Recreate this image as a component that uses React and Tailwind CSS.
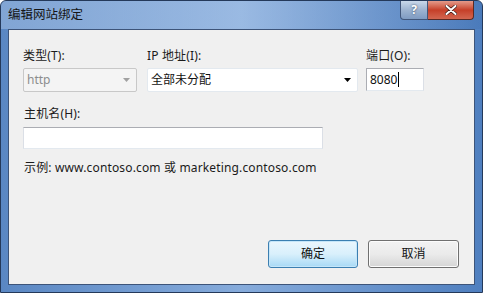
import React from 'react'

const font = { fontFamily: '"Noto Sans", "Noto Sans CJK SC", sans-serif' }

function Arrow({ disabled }) {
  return (
    <svg width="7" height="4" viewBox="0 0 7 4" className="shrink-0">
      <path d="M0 0h7L3.5 4z" fill={disabled ? '#a0a0a0' : '#000'} />
    </svg>
  )
}

function Combo({ value, disabled, className }) {
  return (
    <div
      className={
        'flex items-center h-[24px] pl-[3px] pr-[6px] rounded-[2px] border ' +
        (disabled
          ? 'bg-[#f4f4f4] border-[#c8c8c8] text-[#8d8d8d] '
          : 'bg-white border-[#e3e9ef] text-[#111] ') +
        className
      }
    >
      <span className="flex-1 text-[12px] leading-none">{value}</span>
      <Arrow disabled={disabled} />
    </div>
  )
}

function Label({ children }) {
  return <div className="h-[16px] text-[12px] leading-[16px] text-[#1b1b1b] tracking-[0.15px]">{children}</div>
}

export default function App() {
  return (
    <div
      className="w-[483px] h-[293px] flex flex-col border border-[#24395a] rounded-t-[6px] bg-gradient-to-r from-[#5a87c3] via-[#86abdb] to-[#4f7fbf] overflow-hidden"
      style={font}
    >
      {/* title bar */}
      <div className="h-[28px] flex items-start shrink-0 bg-gradient-to-r from-[#a9c4e6]/50 via-[#b8d0ee]/40 to-[#3f6fb0]/30">
        <div className="pl-[7px] pt-[6px] text-[12.5px] leading-[16px] text-[#151515]">编辑网站绑定</div>
        <div className="ml-auto mr-[8px] flex h-[19px]">
          <div className="w-[28px] h-[19px] flex items-center justify-center rounded-bl-[4px] border border-t-0 border-[#41567a] bg-gradient-to-b from-[#c9d8ea] via-[#9db3d0] to-[#7f9bc2] text-white text-[12px] font-bold leading-none [text-shadow:0_0_2px_#283a55]">
            ?
          </div>
          <div className="w-[46px] h-[19px] flex items-center justify-center rounded-br-[4px] border border-t-0 border-l-0 border-[#5a2a24] bg-gradient-to-b from-[#e39a8a] via-[#c63f28] to-[#d36650]">
            <svg width="12" height="10" viewBox="0 0 12 10">
              <path d="M1.5 1l9 8M10.5 1l-9 8" stroke="#3b1b16" strokeWidth="3.4" strokeLinecap="round" />
              <path d="M1.5 1l9 8M10.5 1l-9 8" stroke="#fff" strokeWidth="2" strokeLinecap="round" />
            </svg>
          </div>
        </div>
      </div>

      {/* client area */}
      <div className="flex-1 mx-[7px] mb-[7px] border border-[#3d5479] bg-[#f0f0f0] flex flex-col pl-[14px] pr-[15px] pt-[18px] pb-[16px]">
        <div className="flex">
          <div className="w-[114px]">
            <Label>类型(T):</Label>
            <Combo value="http" disabled className="mt-[4px]" />
          </div>
          <div className="w-[211px] ml-[10px]">
            <Label>IP 地址(I):</Label>
            <Combo value="全部未分配" className="mt-[4px]" />
          </div>
          <div className="w-[58px] ml-[8px]">
            <Label>端口(O):</Label>
            <div className="mt-[4px] h-[23px] flex items-center pl-[3px] bg-white border border-[#abadb3] border-b-[#e3e9ef] border-r-[#dbdfe6] text-[12px] leading-none text-[#111]">
              8080<span className="inline-block w-px h-[15px] bg-black ml-[1px]" />
            </div>
          </div>
        </div>

        <div className="mt-[14px] ml-px">
          <Label>主机名(H):</Label>
        </div>
        <div className="mt-[5px] w-[300px] h-[22px] bg-white border border-[#abadb3] border-b-[#e3e9ef] border-x-[#dbdfe6]" />

        <div className="mt-[11px] ml-px text-[12px] leading-[16px] text-[#1b1b1b] tracking-[0.15px]">
          示例: www.contoso.com 或 marketing.contoso.com
        </div>

        <div className="mt-auto flex justify-end gap-[10px]">
          <button className="w-[90px] h-[28px] rounded-[3px] border border-[#3c7fb1] bg-gradient-to-b from-[#eaf6fd] via-[#d9f0fc] to-[#a7d9f5] text-[12px] text-[#111] shadow-[inset_0_0_0_1px_#c5e6f9]">
            确定
          </button>
          <button className="w-[91px] h-[28px] rounded-[3px] border border-[#707070] bg-gradient-to-b from-[#f2f2f2] via-[#ebebeb] to-[#d5d5d5] text-[12px] text-[#111] shadow-[inset_0_0_0_1px_#fcfcfc]">
            取消
          </button>
        </div>
      </div>
    </div>
  )
}
